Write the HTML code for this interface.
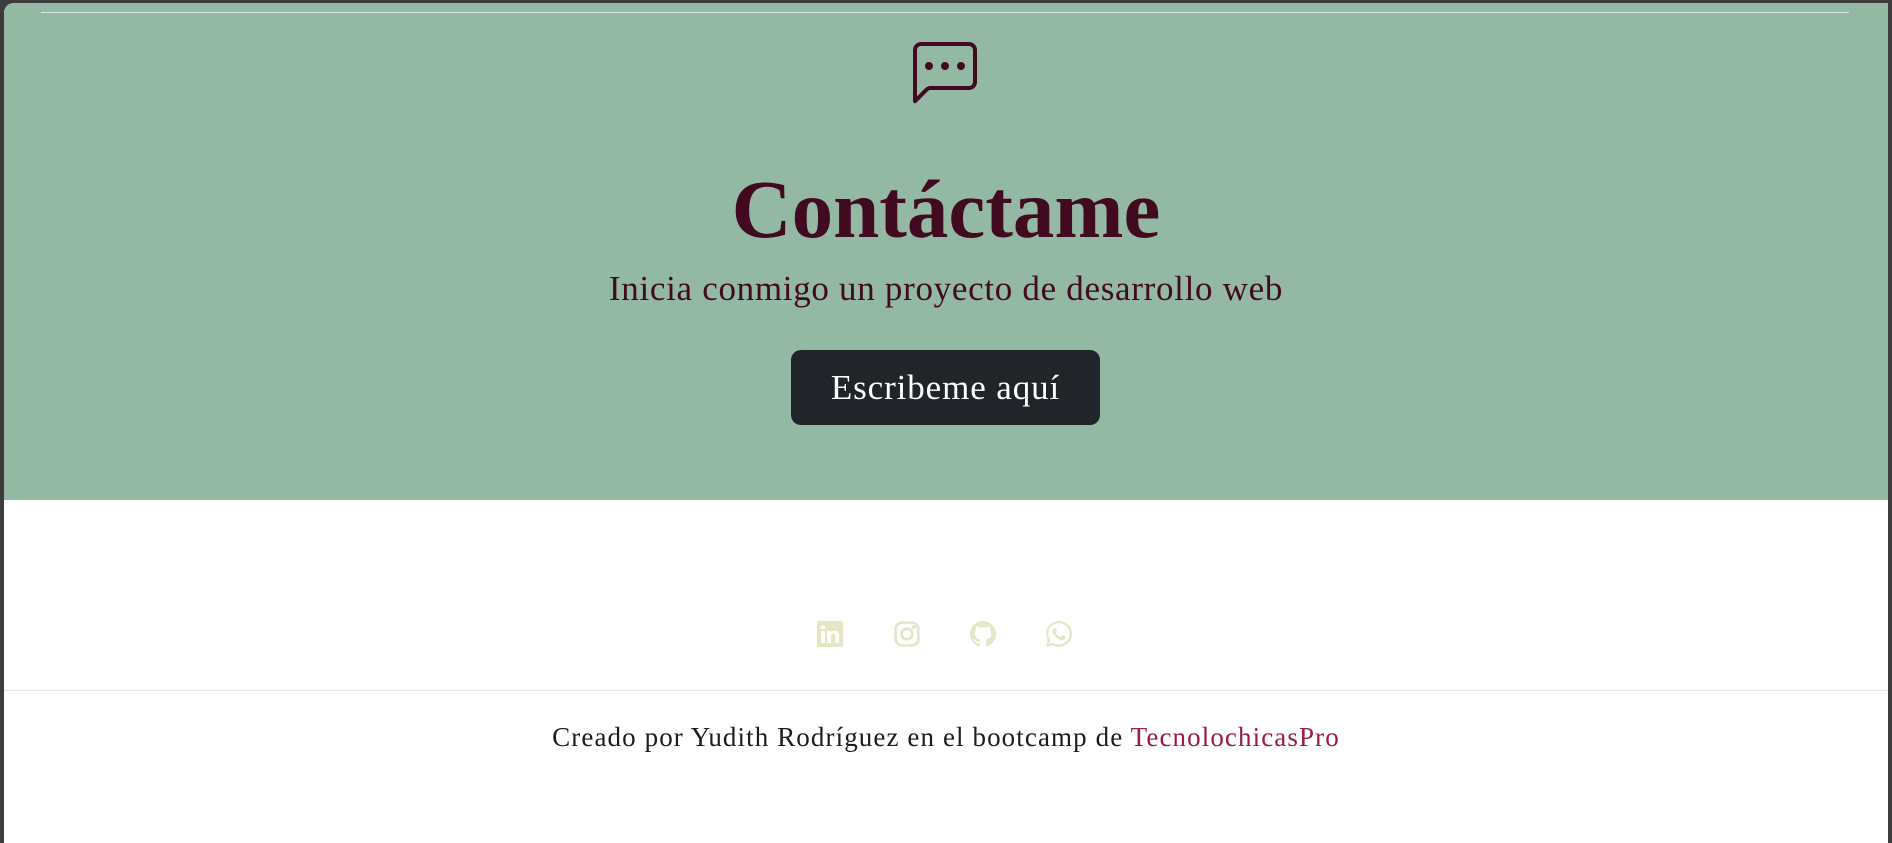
<!DOCTYPE html>
<html><head><meta charset="utf-8">
<style>
html,body{margin:0;padding:0;width:1892px;height:843px;overflow:hidden;background:#3c3c3c;}
.frame{position:absolute;left:4px;top:3px;width:1884px;height:840px;background:#fff;border-top-left-radius:10px;overflow:hidden;}
.hero{position:absolute;left:0;top:0;width:1884px;height:497px;background:#93b8a3;}
.hr{position:absolute;left:37px;top:9px;width:1808px;height:1px;background:#dde6e0;}
.ico{position:absolute;left:909px;top:39px;}
h1{position:absolute;left:0;width:100%;top:165px;margin:0;text-align:center;font:bold 83px/1 "Liberation Serif",serif;color:#420a20;}
.sub{position:absolute;left:0;width:100%;top:268px;text-align:center;font:35px/1 "Liberation Serif",serif;letter-spacing:0.7px;color:#420a20;}
.btn{position:absolute;left:787px;top:347px;width:309px;height:75px;background:#212529;border-radius:10px;color:#fff;font:35px/75px "Liberation Serif",serif;letter-spacing:0.9px;text-align:center;}
.soc{position:absolute;top:618px;}
.line{position:absolute;left:0;top:687px;width:100%;height:1px;background:#e2e2e2;}
.foot{position:absolute;left:0;width:100%;top:721px;text-align:center;font:27px/1 "Liberation Serif",serif;letter-spacing:1.1px;color:#1f1a1c;}
.foot span{color:#9b1d3d;}
</style></head><body>
<div class="frame">
<div class="hero">
<div class="hr"></div>
<svg class="ico" width="64" height="64" viewBox="0 0 16 16" fill="#420a20"><path d="M14 1a1 1 0 0 1 1 1v8a1 1 0 0 1-1 1H4.414A2 2 0 0 0 3 11.586l-2 2V2a1 1 0 0 1 1-1h12zM2 0a2 2 0 0 0-2 2v12.793a.5.5 0 0 0 .854.353l2.853-2.853A1 1 0 0 1 4.414 12H14a2 2 0 0 0 2-2V2a2 2 0 0 0-2-2H2z"/><path d="M5 6a1 1 0 1 1-2 0 1 1 0 0 1 2 0zm4 0a1 1 0 1 1-2 0 1 1 0 0 1 2 0zm4 0a1 1 0 1 1-2 0 1 1 0 0 1 2 0z"/></svg>
<h1>Contáctame</h1>
<div class="sub">Inicia conmigo un proyecto de desarrollo web</div>
<div class="btn">Escribeme aquí</div>
</div>
<svg class="soc" style="left:813px" width="26" height="26" viewBox="0 0 16 16" fill="#e4e6c6"><path d="M0 1.1C0 .5.5 0 1.2 0h13.6c.7 0 1.2.5 1.2 1.1v13.8c0 .6-.5 1.1-1.2 1.1H1.2C.5 16 0 15.5 0 14.9V1.1zm4.9 12.4V6.2H2.5v7.3h2.4zM3.7 5.2c.8 0 1.4-.6 1.4-1.3 0-.7-.5-1.3-1.4-1.3-.8 0-1.4.6-1.4 1.3 0 .7.5 1.3 1.3 1.3zm4.9 8.3V9.4c0-.2 0-.4.1-.6.2-.4.6-.9 1.3-.9.9 0 1.2.7 1.2 1.6v3.900h2.4V9.3c0-2.2-1.2-3.3-2.8-3.3-1.3 0-1.9.7-2.200 1.2V6.2H6.2c0 .7 0 7.3 0 7.3h2.4z"/></svg>
<svg class="soc" style="left:890px" width="26" height="26" viewBox="0 0 16 16" fill="none" stroke="#e4e6c6" stroke-width="1.6"><rect x="1" y="1" width="14" height="14" rx="4"/><circle cx="8" cy="8" r="3.3"/><circle cx="12.2" cy="3.8" r=".5" fill="#e4e6c6"/></svg>
<svg class="soc" style="left:966px" width="26" height="26" viewBox="0 0 16 16" fill="#e4e6c6"><path d="M8 0C3.58 0 0 3.580 0 8c0 3.54 2.29 6.53 5.47 7.59.4.07.55-.17.55-.38 0-.19-.01-.82-.01-1.49-2.01.37-2.53-.49-2.69-.94-.09-.23-.48-.94-.82-1.13-.28-.15-.68-.52-.01-.53.63-.01 1.08.58 1.23.82.72 1.21 1.87.87 2.33.66.07-.52.28-.87.51-1.07-1.78-.2-3.64-.89-3.64-3.95 0-.87.31-1.59.82-2.15-.08-.2-.36-1.02.08-2.12 0 0 .67-.21 2.2.82.64-.18 1.32-.27 2-.27.68 0 1.36.09 2 .27 1.53-1.04 2.2-.82 2.2-.82.44 1.1.16 1.92.08 2.12.51.56.82 1.27.82 2.15 0 3.07-1.87 3.75-3.65 3.95.29.25.54.73.54 1.48 0 1.07-.01 1.93-.01 2.2 0 .21.15.46.55.38A8.01 8.01 0 0 0 16 8c0-4.42-3.58-8-8-8z"/></svg>
<svg class="soc" style="left:1042px" width="26" height="26" viewBox="0 0 16 16" fill="#e4e6c6"><path d="M13.6 2.3A7.85 7.85 0 0 0 7.99 0C3.6 0 .04 3.56.04 7.94c0 1.4.37 2.77 1.06 3.97L0 16l4.2-1.1a7.9 7.9 0 0 0 3.79.97c4.38 0 7.95-3.56 7.95-7.94 0-2.12-.83-4.12-2.34-5.62zM7.99 14.53a6.6 6.6 0 0 1-3.36-.92l-.24-.14-2.49.65.67-2.430-.16-.25a6.56 6.56 0 0 1-1.01-3.5c0-3.64 2.96-6.6 6.6-6.6a6.6 6.6 0 0 1 6.6 6.6c0 3.64-2.96 6.6-6.6 6.6zm3.62-4.94c-.2-.1-1.17-.58-1.35-.64-.18-.07-.31-.1-.45.1-.13.2-.51.64-.63.78-.12.13-.23.15-.43.05-.2-.1-.84-.31-1.6-.99-.59-.52-.99-1.17-1.1-1.37-.12-.2-.01-.31.09-.41.09-.09.2-.23.3-.35.1-.12.13-.2.2-.33.07-.13.03-.25-.02-.35-.05-.1-.45-1.07-.61-1.47-.16-.39-.33-.33-.45-.34h-.38a.73.73 0 0 0-.53.25c-.18.2-.7.68-.7 1.65 0 .97.71 1.91.81 2.05.1.13 1.4 2.13 3.39 2.99.47.2.84.33 1.13.42.48.15.91.13 1.25.08.38-.06 1.17-.48 1.34-.94.16-.46.16-.86.11-.94-.05-.08-.18-.13-.38-.23z"/></svg>
<div class="line"></div>
<div class="foot">Creado por Yudith Rodríguez en el bootcamp de <span>TecnolochicasPro</span></div>
</div>
</body></html>
